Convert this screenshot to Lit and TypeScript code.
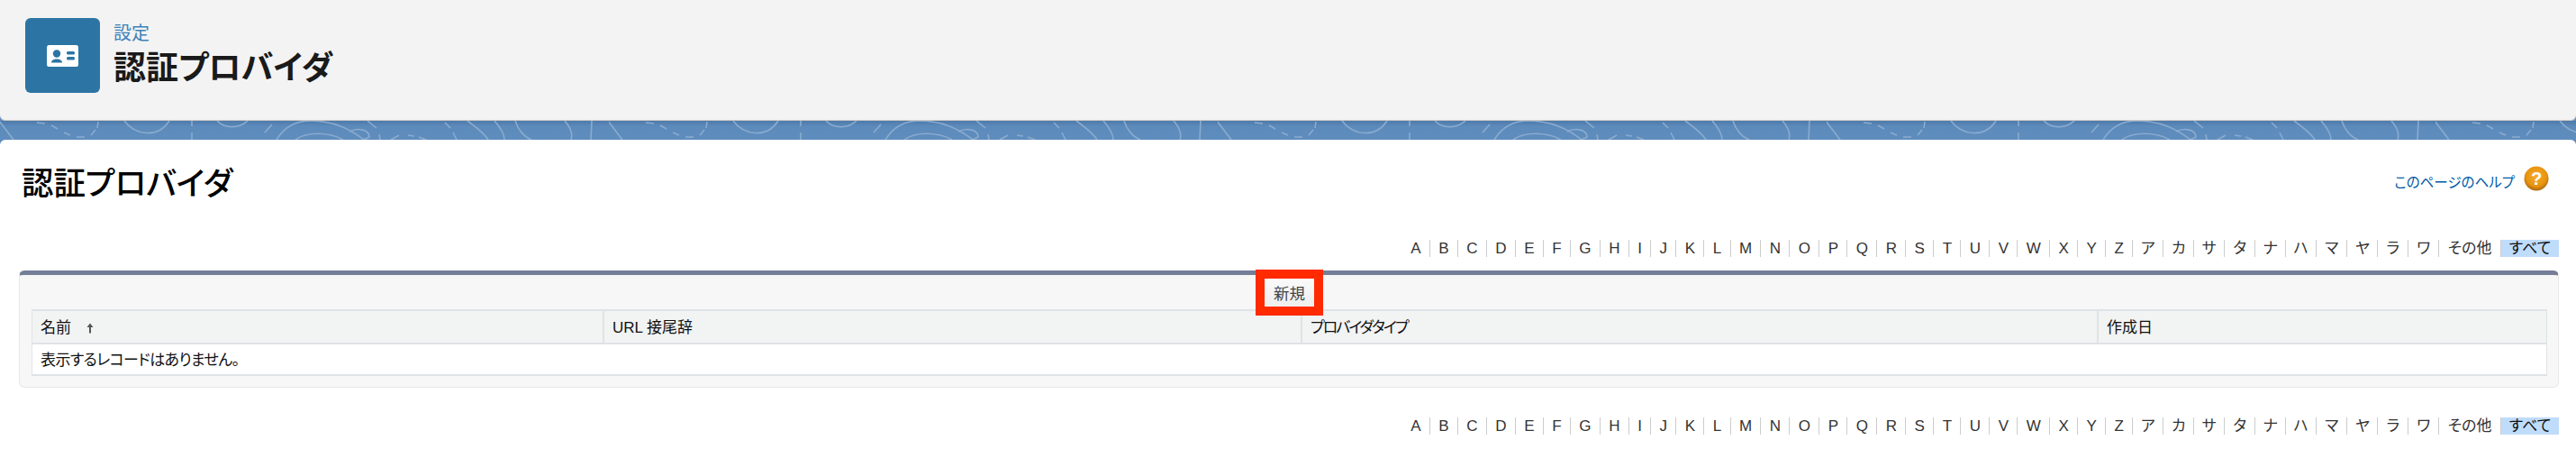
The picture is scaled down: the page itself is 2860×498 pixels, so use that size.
import {LitElement, html, css, svg} from 'lit';
import {customElement} from 'lit/decorators.js';

const LETTERS = 'ABCDEFGHIJKLMNOPQRSTUVWXYZ'.split('');
const KANA = ['ア','カ','サ','タ','ナ','ハ','マ','ヤ','ラ','ワ'];

const COLUMNS = [
    {label: '名前', width: 635, sorted: true},
    {label: 'URL 接尾辞', width: 775},
    {label: 'プロバイダタイプ', width: 884, tight: true},
    {label: '作成日'},
];

// one tile of the swirl texture behind the header, it repeats every 676px
const SWIRLS = [
    'M-1 0L15 21',
    'M41 2L50 3', 'M57 5L64 9', 'M71 13L78 16', 'M85 18L94 18', 'M101 16L106 10', 'M108 8L109 1',
    'M138 0C150 16 175 20 188 0',
    'M213 0L213 6', 'M213 13L213 21',
    'M241 0C250 9 265 9 275 0',
    'M294 13L302 4',
    'M307 21C315 8 328 0 345 0C365 0 385 6 404 21',
    'M388 12C398 7 410 10 410 18L404 21',
    'M328 21C340 12 365 12 381 21',
    'M408 0L418 8',
    'M421 15L422 21',
    'M434 21L443 16', 'M453 16L460 17', 'M465 18L473 21',
    'M494 2L500 8', 'M503 13L507 21',
    'M519 0C530 8 538 14 542 21',
    'M549 0C556 8 560 14 560 21',
    'M572 0C575 10 582 18 590 21',
    'M627 0C634 8 636 15 634 21',
    'M657 0L656 21',
];

@customElement('app-root')
export class AppRoot extends LitElement {
    static styles = css`
        :host {
            display: block;
            width: 2860px;
            height: 498px;
            overflow: hidden;
            background: linear-gradient(#5f8dbd 160px, #fff 160px);
            font-family: "Liberation Sans", "Noto Sans CJK JP", sans-serif;
            font-feature-settings: "palt";
            color: #111;
        }

        .header {
            height: 134px;
            box-sizing: border-box;
            padding: 20px 28px;
            display: flex;
            gap: 15px;
            background: #f3f3f3;
            border-bottom: 1px solid #c9c7c5;
            border-radius: 0 0 6px 6px;
        }

        .header-icon {
            width: 83px;
            height: 83px;
            border-radius: 6px;
            background: #2c74a3;
            display: flex;
            align-items: center;
            justify-content: center;
        }

        .crumb {
            font-size: 20px;
            line-height: 24px;
            margin-top: 5px;
            color: #3e82b8;
        }

        .header-title {
            font-size: 36px;
            line-height: 44px;
            margin-top: 5px;
            font-weight: 700;
            color: #1a1a1a;
        }

        .band {
            display: block;
            width: 2860px;
            height: 21px;
            background: linear-gradient(#4d7aa9, #5c8abb 6px, #5f8dbd);
        }

        .page {
            height: 343px;
            box-sizing: border-box;
            padding: 0 19px 0 21px;
            border-radius: 6px 6px 0 0;
            background: #fff;
        }

        .title-row {
            display: flex;
            justify-content: space-between;
            height: 111px;
            box-sizing: border-box;
            padding: 24px 11px 0 3px;
        }

        .page-title {
            font-size: 35.500px;
            line-height: 50px;
            font-weight: 500;
            color: #000;
        }

        .help {
            display: flex;
            align-items: flex-start;
            gap: 10px;
            height: 28px;
            margin-top: 5px;
            font-size: 15.500px;
            line-height: 22px;
            color: #015ba7;
        }

        .help-text {
            margin-top: 8px;
        }

        .alpha {
            display: flex;
            justify-content: flex-end;
            height: 19px;
            font-size: 17px;
            line-height: 19px;
            color: #333;
        }

        .alpha span {
            padding: 0 9.350px;
            border-right: 1px solid #ccc;
        }

        .alpha .kana {
            width: 34px;
            padding: 0;
            box-sizing: border-box;
            text-align: center;
        }

        .alpha .other {
            padding: 0 9.500px;
            border-right: none;
        }

        .alpha .all {
            width: 65px;
            padding: 0;
            box-sizing: border-box;
            text-align: center;
            background: #c0dcfb;
            color: #111;
            border-left: 1px solid #ccc;
            border-right: none;
        }

        .panel {
            position: relative;
            margin: 15px 0 33px;
            height: 130px;
            box-sizing: border-box;
            padding: 38px 12px 0 13px;
            background: #f7f7f7;
            border: 1px solid #e8e8e8;
            border-top: 5px solid #747e96;
            border-radius: 6px;
        }

        .highlight {
            position: absolute;
            left: 1372px;
            top: -6px;
            width: 75px;
            height: 51px;
            box-sizing: border-box;
            border: 10px solid #ff2a00;
            display: flex;
            align-items: center;
            justify-content: center;
            background: linear-gradient(#fafafa, #eeeeee);
            font-size: 17.500px;
            color: #444;
        }

        .table {
            background: #fff;
            border: 1px solid #e0e3e5;
            border-top-width: 2px;
            border-bottom-width: 2px;
        }

        .head {
            display: flex;
            height: 37px;
            box-sizing: border-box;
            background: #f2f3f3;
            border-bottom: 2px solid #e0e3e5;
            font-size: 17px;
            line-height: 37px;
        }

        .head div {
            box-sizing: border-box;
            padding-left: 9px;
            border-right: 2px solid #e0e3e5;
        }

        .head div:last-child {
            flex: 1;
            border-right: none;
        }

        .head .tight {
            letter-spacing: -2px;
        }

        .arrow {
            margin-left: 12px;
            vertical-align: -1px;
        }

        .empty {
            height: 33px;
            padding-left: 9px;
            font-size: 17px;
            line-height: 35px;
            letter-spacing: -0.600px;
        }
    `;

    renderAlpha() {
        return html`
            <div class="alpha">
                ${LETTERS.map((a) => html`<span>${a}</span>`)}
                ${KANA.map((a) => html`<span class="kana">${a}</span>`)}
                <span class="other">その他</span>
                <span class="all">すべて</span>
            </div>
        `;
    }

    render() {
        return html`
            <div class="header">
                <div class="header-icon">
                    <svg width="35" height="24" viewBox="0 0 35 24">
                        <rect width="35" height="24" rx="2.500" fill="#fff"/>
                        <circle cx="11" cy="9.500" r="4.200" fill="#2c74a3"/>
                        <path d="M5 19.500c0-2.600 3-4 6-4s6 1.400 6 4z" fill="#2c74a3"/>
                        <rect x="22" y="7" width="9" height="3.500" rx="1.500" fill="#2c74a3"/>
                        <rect x="22" y="13" width="9" height="3.500" rx="1.500" fill="#2c74a3"/>
                    </svg>
                </div>
                <div>
                    <div class="crumb">設定</div>
                    <div class="header-title">認証プロバイダ</div>
                </div>
            </div>
            <svg class="band" viewBox="0 0 2860 21">
                <defs>
                    <pattern id="swirl" width="676" height="21" patternUnits="userSpaceOnUse">
                        ${SWIRLS.map((d) => svg`<path d=${d} fill="none" stroke="#8aabcf" stroke-width="1.600"/>`)}
                    </pattern>
                </defs>
                <rect width="2860" height="21" fill="url(#swirl)"/>
            </svg>
            <div class="page">
                <div class="title-row">
                    <div class="page-title">認証プロバイダ</div>
                    <div class="help">
                        <span class="help-text">このページのヘルプ</span>
                        <svg width="28" height="28" viewBox="0 0 28 28">
                            <defs>
                                <radialGradient id="coin" cx="50%" cy="40%" r="60%">
                                    <stop offset="0" stop-color="#f6ab2c"/>
                                    <stop offset="0.700" stop-color="#e8930f"/>
                                    <stop offset="1" stop-color="#a9690f"/>
                                </radialGradient>
                            </defs>
                            <circle cx="14" cy="14" r="13.500" fill="url(#coin)"/>
                            <text x="14" y="21" text-anchor="middle" font-size="20" font-weight="700" fill="#fff" font-family="Liberation Sans">?</text>
                        </svg>
                    </div>
                </div>
                ${this.renderAlpha()}
                <div class="panel">
                    <div class="highlight">新規</div>
                    <div class="table">
                        <div class="head">
                            ${COLUMNS.map((c) => html`
                                <div class=${c.tight ? 'tight' : ''} style=${c.width ? `width:${c.width}px` : ''}>
                                    ${c.label}
                                    ${c.sorted ? html`<svg class="arrow" width="8" height="12" viewBox="0 0 8 12"><path d="M4 0.500L7.500 5H5v6.500H3V5H0.500z" fill="#555"/></svg>` : ''}
                                </div>
                            `)}
                        </div>
                        <div class="empty">表示するレコードはありません。</div>
                    </div>
                </div>
                ${this.renderAlpha()}
            </div>
        `;
    }
}
